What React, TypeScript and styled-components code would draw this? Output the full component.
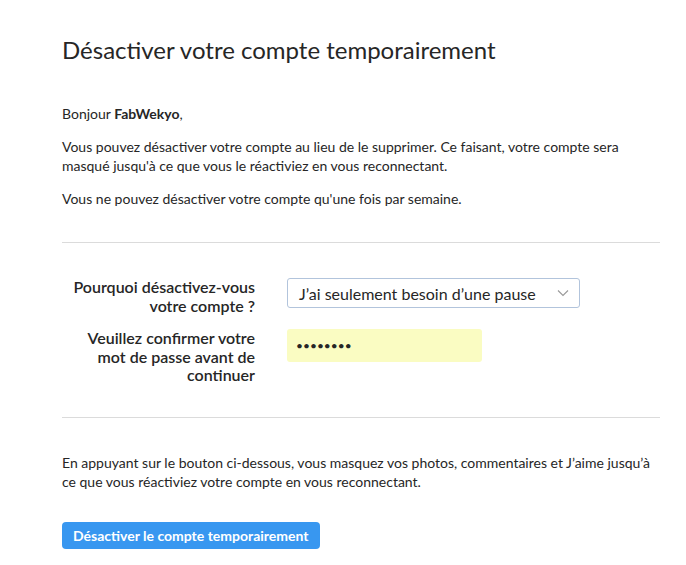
import styled, { createGlobalStyle } from "styled-components";

const GlobalStyle = createGlobalStyle`
  body {
    margin: 0;
    background: #ffffff;
    font-family: "Segoe UI", Lato, "Open Sans", sans-serif;
    color: #262626;
  }
`;

const Page = styled.div`
  padding: 35px 26px 0 62px;
  width: 598px;
`;

const Title = styled.h1`
  margin: 0 0 39px;
  font-size: 24px;
  font-weight: 400;
  line-height: 30px;
  color: #262626;
`;

const Text = styled.p`
  margin: 0 0 14px;
  font-size: 14px;
  line-height: 19px;
  color: #262626;
`;

// top margins collapse with the margin of the block above
const Divider = styled.hr<{ $top: number }>`
  border: 0;
  border-top: 1px solid #dbdbdb;
  margin: ${(p) => p.$top}px 0 35px;
`;

const Row = styled.div`
  display: flex;
  align-items: flex-start;
  margin-bottom: 14px;
`;

const Aside = styled.label`
  width: 225px;
  box-sizing: border-box;
  padding: 0 32px 0 0;
  text-align: right;
  font-size: 16px;
  font-weight: 600;
  line-height: 18.5px;
  color: #262626;
`;

const SelectBox = styled.div`
  width: 293px;
  height: 30px;
  box-sizing: border-box;
  border: 1px solid #b2c4dc;
  border-radius: 3px;
  display: flex;
  align-items: center;
  justify-content: space-between;
  padding: 0 10px 0 11px;
  font-size: 16px;
  color: #262626;
`;

const PasswordBox = styled.div<{ $width: number }>`
  width: ${(p) => p.$width}px;
  height: 33px;
  box-sizing: border-box;
  background: #fafcc2;
  border-radius: 3px;
  display: flex;
  align-items: center;
  padding: 0 9px;
  font-size: 12px;
  color: #262626;
`;

const Button = styled.button`
  margin-top: 17px;
  height: 27px;
  padding: 0 11px;
  border: 0;
  border-radius: 4px;
  background: #3897f0;
  color: #ffffff;
  font-family: inherit;
  font-size: 14px;
  font-weight: 700;
`;

const Chevron = () => (
  <svg width="12" height="8" viewBox="0 0 12 8" fill="none">
    <path d="M1 1.5 6 6.5 11 1.5" stroke="#999" strokeWidth="1.1" />
  </svg>
);

export default function App() {
  return (
    <>
      <GlobalStyle />
      <Page>
        <Title>Désactiver votre compte temporairement</Title>
        <Text>
          Bonjour <b>FabWekyo</b>,
        </Text>
        <Text>
          Vous pouvez désactiver votre compte au lieu de le supprimer. Ce faisant, votre compte sera
          masqué jusqu'à ce que vous le réactiviez en vous reconnectant.
        </Text>
        <Text>Vous ne pouvez désactiver votre compte qu'une fois par semaine.</Text>
        <Divider $top={34} />
        <Row>
          <Aside>Pourquoi désactivez-vous votre compte ?</Aside>
          <SelectBox>
            <span>J’ai seulement besoin d’une pause</span>
            <Chevron />
          </SelectBox>
        </Row>
        <Row>
          <Aside>Veuillez confirmer votre mot de passe avant de continuer</Aside>
          <PasswordBox $width={195}>••••••••</PasswordBox>
        </Row>
        <Divider $top={32} />
        <Text>
          En appuyant sur le bouton ci-dessous, vous masquez vos photos, commentaires et J’aime jusqu’à
          ce que vous réactiviez votre compte en vous reconnectant.
        </Text>
        <Button>Désactiver le compte temporairement</Button>
      </Page>
    </>
  );
}
